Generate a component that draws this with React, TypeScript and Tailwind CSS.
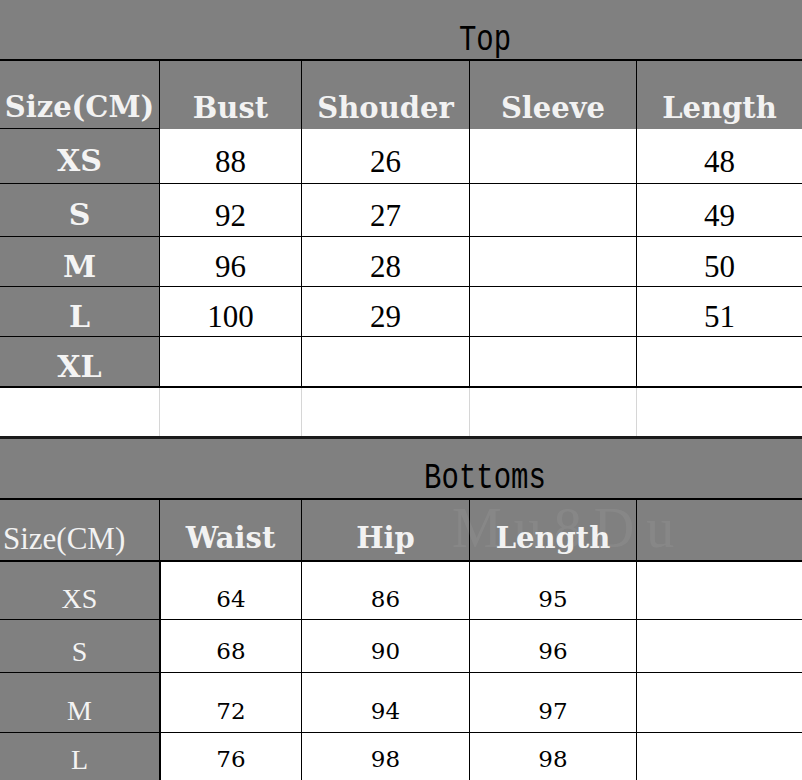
import React from "react";

const GRAY = "bg-[#808080]";
const cols = "grid grid-cols-[159px_142px_168px_167px_1fr]";
const headF = { fontFamily: '"DejaVu Serif", serif' };
const numTopF = { fontFamily: '"Liberation Serif", serif' };
const numBotF = { fontFamily: '"DejaVu Serif", serif' };
const titleF = { fontFamily: '"Liberation Mono", monospace' };

type RowProps = {
  h: string;
  pt: string;
  size: string;
  vals: string[];
  sizeClass: string;
  numClass: string;
  numStyle: React.CSSProperties;
  sizeStyle: React.CSSProperties;
  border: string;
  vline: string;
};

function DataRow({ h, pt, size, vals, sizeClass, numClass, numStyle, sizeStyle, border, vline }: RowProps) {
  return (
    <div className={`${cols} ${h}`}>
      <div className={`${GRAY} ${border} border-black flex items-center justify-center ${pt}`}>
        <span className={`${sizeClass} leading-none text-[#f4f4f4]`} style={sizeStyle}>
          {size}
        </span>
      </div>
      {vals.map((v, i) => (
        <div
          key={i}
          className={`bg-white ${border} ${i === 0 ? vline : "border-l"} border-black flex items-center justify-center ${pt}`}
        >
          <span className={`${numClass} leading-none text-black`} style={numStyle}>
            {v}
          </span>
        </div>
      ))}
    </div>
  );
}

export default function App() {
  const topRows = [
    { h: "h-[55px]", border: "border-b", size: "XS", vals: ["88", "26", "", "48"] },
    { h: "h-[53px]", border: "border-b", size: "S", vals: ["92", "27", "", "49"] },
    { h: "h-[50px]", border: "border-b", size: "M", vals: ["96", "28", "", "50"] },
    { h: "h-[50px]", border: "border-b", size: "L", vals: ["100", "29", "", "51"] },
    { h: "h-[51px]", border: "border-b-2", size: "XL", vals: ["", "", "", ""] },
  ];
  const botRows = [
    { h: "h-[58px]", pt: "pt-[17px]", border: "border-b", size: "XS", vals: ["64", "86", "95", ""] },
    { h: "h-[53px]", pt: "pt-[11px]", border: "border-b", size: "S", vals: ["68", "90", "96", ""] },
    { h: "h-[60px]", pt: "pt-[17px]", border: "border-b", size: "M", vals: ["72", "94", "97", ""] },
    { h: "h-[47px]", pt: "pt-[6px]", border: "border-b-0", size: "L", vals: ["76", "98", "98", ""] },
  ];
  const topHeads = ["Bust", "Shouder", "Sleeve", "Length"];
  const botHeads = ["Waist", "Hip", "Length", ""];

  return (
    <div className="relative w-[802px] h-[780px] overflow-hidden bg-white">
      {/* Top title band */}
      <div className={`h-[61px] ${GRAY} border-b-2 border-black flex items-center justify-center pl-[168px] pt-[22px]`}>
        <div className="scale-y-[1.3] text-[29px] leading-none text-black" style={titleF}>
          Top
        </div>
      </div>

      {/* Top header row */}
      <div className={`${cols} h-[68px]`}>
        <div className={`${GRAY} border-b border-black flex items-center justify-center pt-[26px]`}>
          <span className="text-[29px] font-bold leading-none text-[#f2f2f2]" style={headF}>
            Size(CM)
          </span>
        </div>
        {topHeads.map((t) => (
          <div key={t} className={`${GRAY} border-l border-black flex items-center justify-center pt-[26px]`}>
            <span className="text-[29px] font-bold leading-none text-[#f2f2f2]" style={headF}>
              {t}
            </span>
          </div>
        ))}
      </div>

      {topRows.map((r) => (
        <DataRow
          key={"t" + r.size}
          h={r.h}
          pt="pt-[10px]"
          size={r.size}
          vals={r.vals}
          border={r.border}
          vline="border-l"
          sizeClass="text-[30px] font-bold"
          sizeStyle={headF}
          numClass="text-[31px]"
          numStyle={numTopF}
        />
      ))}

      {/* Empty spacer row */}
      <div className={`${cols} h-[48px]`}>
        <div className="bg-white" />
        <div className="bg-white border-l border-[#d6d6d6]" />
        <div className="bg-white border-l border-[#d6d6d6]" />
        <div className="bg-white border-l border-[#d6d6d6]" />
        <div className="bg-white border-l border-[#d6d6d6]" />
      </div>

      {/* Bottoms title band */}
      <div
        className={`h-[64px] ${GRAY} border-t-[3px] border-t-[#1a1a1a] border-b-2 border-b-black flex items-center justify-center pl-[168px] pt-[20px]`}
      >
        <div className="scale-y-[1.3] text-[29px] leading-none text-black" style={titleF}>
          Bottoms
        </div>
      </div>

      {/* Bottoms header row */}
      <div className={`${cols} h-[62px]`}>
        <div className={`${GRAY} border-b-2 border-black flex items-center justify-start pl-[3px] pt-[16px]`}>
          <span className="text-[31px] leading-none text-[#f2f2f2]" style={numTopF}>
            Size(CM)
          </span>
        </div>
        {botHeads.map((t, i) => (
          <div
            key={i}
            className={`${GRAY} border-b-2 border-l border-black flex items-center justify-center pt-[16px]`}
          >
            <span className="text-[29px] font-bold leading-none text-[#f2f2f2]" style={headF}>
              {t}
            </span>
          </div>
        ))}
      </div>

      {botRows.map((r) => (
        <DataRow
          key={"b" + r.size}
          h={r.h}
          pt={r.pt}
          size={r.size}
          vals={r.vals}
          border={r.border}
          vline="border-l-2"
          sizeClass="text-[28px]"
          sizeStyle={numTopF}
          numClass="text-[23px]"
          numStyle={numBotF}
        />
      ))}

      {/* Watermark */}
      <div
        className="pointer-events-none absolute left-[452px] top-[500px] text-[56px] leading-none tracking-[12px] text-white opacity-[0.06]"
        style={numTopF}
      >
        Mu8Du
      </div>
    </div>
  );
}
